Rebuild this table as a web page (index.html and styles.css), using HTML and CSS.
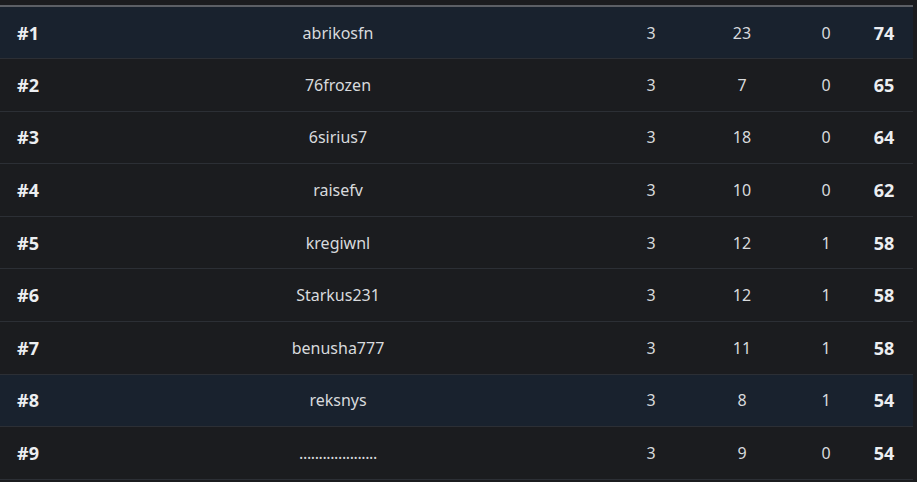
FILE: index.html
```html
<!DOCTYPE html>
<html lang="en">
  <head>
    <meta charset="UTF-8" />
    <meta name="viewport" content="width=device-width, initial-scale=1.0" />
    <title>Leaderboard</title>
    <link rel="stylesheet" href="styles.css">
  </head>
  <body>
    <table class="board">
      <colgroup>
        <col class="c-rank" />
        <col class="c-name" />
        <col class="c-gap" />
        <col class="c-a" />
        <col class="c-b" />
        <col class="c-c" />
        <col class="c-pts" />
      </colgroup>
      <tbody>
        <tr class="row active">
          <td class="rank">#1</td><td class="name">abrikosfn</td><td></td>
          <td>3</td><td>23</td><td>0</td><td class="pts">74</td>
        </tr>
        <tr class="row">
          <td class="rank">#2</td><td class="name">76frozen</td><td></td>
          <td>3</td><td>7</td><td>0</td><td class="pts">65</td>
        </tr>
        <tr class="row">
          <td class="rank">#3</td><td class="name">6sirius7</td><td></td>
          <td>3</td><td>18</td><td>0</td><td class="pts">64</td>
        </tr>
        <tr class="row">
          <td class="rank">#4</td><td class="name">raisefv</td><td></td>
          <td>3</td><td>10</td><td>0</td><td class="pts">62</td>
        </tr>
        <tr class="row">
          <td class="rank">#5</td><td class="name">kregiwnl</td><td></td>
          <td>3</td><td>12</td><td>1</td><td class="pts">58</td>
        </tr>
        <tr class="row">
          <td class="rank">#6</td><td class="name">Starkus231</td><td></td>
          <td>3</td><td>12</td><td>1</td><td class="pts">58</td>
        </tr>
        <tr class="row">
          <td class="rank">#7</td><td class="name">benusha777</td><td></td>
          <td>3</td><td>11</td><td>1</td><td class="pts">58</td>
        </tr>
        <tr class="row me">
          <td class="rank">#8</td><td class="name">reksnys</td><td></td>
          <td>3</td><td>8</td><td>1</td><td class="pts">54</td>
        </tr>
        <tr class="row">
          <td class="rank">#9</td><td class="name dots">....................</td><td></td>
          <td>3</td><td>9</td><td>0</td><td class="pts">54</td>
        </tr>
      </tbody>
    </table>
  </body>
</html>
```

FILE: styles.css
```css
* {
  margin: 0;
  padding: 0;
  box-sizing: border-box;
}

body {
  font-family: "Noto Sans", Arial, sans-serif;
  background-color: #1b1c1f;
  color: #d8dadd;
  overflow: hidden;
}

.board {
  width: 913px;
  margin-top: 5px;
  border-collapse: collapse;
  table-layout: fixed;
  border-top: 2px solid #5c5f65;
  font-size: 16px;
}

.c-rank { width: 200px; }
.c-name { width: 276px; }
.c-gap { width: 130px; }
.c-a { width: 90px; }
.c-b { width: 92px; }
.c-c { width: 76px; }
.c-pts { width: 49px; }

.row {
  height: 52.6px;
  border-bottom: 1px solid #2c2f35;
}

.row.active,
.row.me {
  background-color: #19222e;
}

.row td {
  text-align: center;
  vertical-align: middle;
}

.row .rank {
  text-align: left;
  padding-left: 17px;
  font-size: 18px;
  font-weight: 700;
  color: #eceef1;
}

.row .pts {
  padding-right: 9px;
  font-size: 18px;
  font-weight: 700;
  color: #eceef1;
}

.dots {
  letter-spacing: -0.4px;
}
```
